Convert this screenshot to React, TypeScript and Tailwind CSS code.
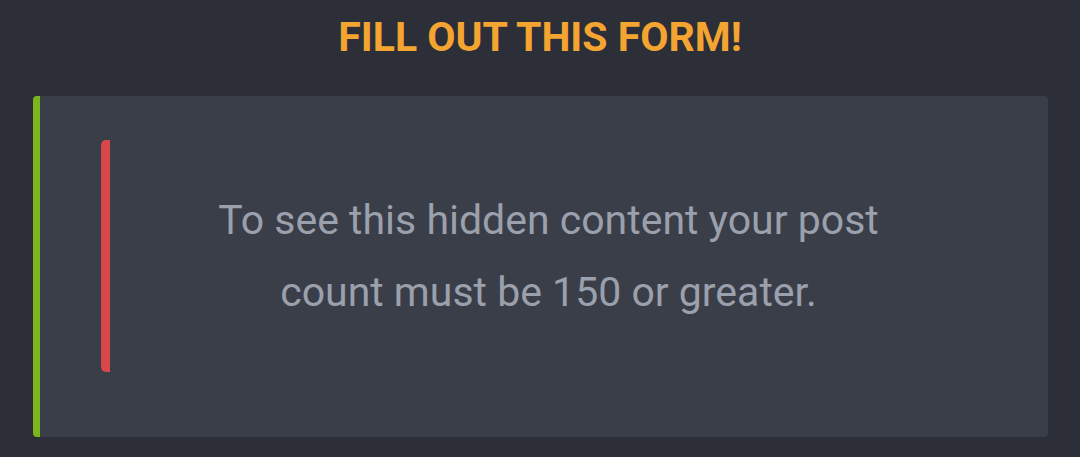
import React from "react";

export default function App() {
  return (
    <div
      className="w-[1080px] h-[457px] bg-[#2c2f37] flex flex-col"
      style={{ fontFamily: "Roboto, 'Liberation Sans', sans-serif" }}
    >
      <h1 className="h-[96px] pt-[11px] text-center text-[41px] font-bold leading-[52px] text-[#f4a431]">
        FILL OUT THIS FORM!
      </h1>
      <div className="mr-[32px] ml-[33px] h-[341px] flex items-start rounded-[4px] border-l-[7px] border-[#7db61c] bg-[#3a3e49] px-[61px] pt-[44px]">
        <div className="flex-1 border-l-[9px] border-[#d9474a] rounded-[5px] py-[44px]">
          <p className="text-center text-[41px] leading-[72px] text-[#9aa0ac]">
            To see this hidden content your post
            <br />
            count must be 150 or greater.
          </p>
        </div>
      </div>
    </div>
  );
}
